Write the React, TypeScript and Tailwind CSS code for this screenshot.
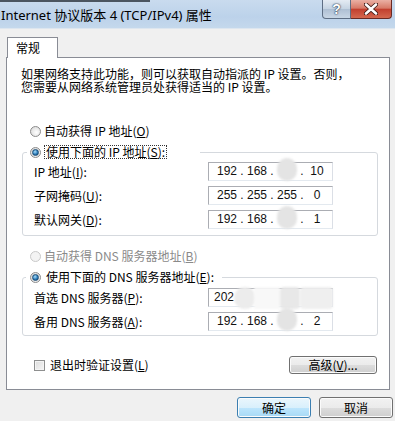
import React from 'react';

type Octet = string | null;

const Radio = ({ checked, disabled }: { checked?: boolean; disabled?: boolean }) => (
  <span
    className={`flex h-[11px] w-[11px] shrink-0 items-center justify-center rounded-full border ${
      disabled
        ? 'border-[#c9c9c9] bg-[#f3f3f3]'
        : 'border-[#8c8c8c] bg-[radial-gradient(circle_at_60%_60%,#ffffff,#d4d4d4)]'
    }`}
  >
    {checked && (
      <span className="h-[7px] w-[7px] rounded-full border border-[#1d4e76] bg-[radial-gradient(circle_at_40%_35%,#a8ddfb,#2d7dba_55%,#0f3f66)]" />
    )}
  </span>
);

const Key = ({ k }: { k: string }) => (
  <>
    (<span className="underline">{k}</span>)
  </>
);

const IpBox = ({ octets }: { octets: Octet[] }) => (
  <div className="flex h-[19px] w-[125px] items-center border border-[#abadb3] border-b-[#e3e9ef] border-r-[#dbdfe6] bg-white pl-[6px] font-['Liberation_Sans',sans-serif] text-[12px] leading-[17px] text-[#111]">
    {octets.map((o, i) => (
      <React.Fragment key={i}>
        {i > 0 && <span className="w-[6px] text-center">.</span>}
        <span className="relative w-[24px] text-center">
          {o ?? '\u00a0'}
          {o === null && (
            <span className="absolute left-[2px] top-[-5px] h-[23px] w-[20px] rounded-full bg-[#e4e4e4] blur-[1px]" />
          )}
        </span>
      </React.Fragment>
    ))}
  </div>
);

const SmearedBox = () => (
  <div className="relative flex h-[19px] w-[125px] items-center border border-[#abadb3] border-b-[#e3e9ef] border-r-[#dbdfe6] bg-white pl-[5px] font-['Liberation_Sans',sans-serif] text-[12px] leading-[17px] text-[#111]">
    <span>202</span>
    <span className="absolute left-[25px] top-[-2px] h-[22px] w-[22px] rounded-full bg-[#ececec] blur-[1px]" />
    <span className="absolute left-[45px] top-[-2px] h-[22px] w-[26px] bg-[#f8f8f8] blur-[1px]" />
    <span className="absolute left-[71px] top-[-2px] h-[22px] w-[20px] rounded-[4px] bg-[#e8e8e8] blur-[1px]" />
    <span className="absolute left-[91px] top-[-2px] h-[22px] w-[33px] rounded-[4px] bg-[#efefef] blur-[1px]" />
  </div>
);

const Row = ({ label, children }: { label: React.ReactNode; children: React.ReactNode }) => (
  <div className="flex h-[19px] items-center">
    <span className="w-[174px] leading-[14px]">{label}</span>
    {children}
  </div>
);

const WinButton = ({ children, primary, className }: { children: React.ReactNode; primary?: boolean; className: string }) => (
  <button
    className={`flex items-center justify-center rounded-[3px] border text-[12px] text-black shadow-[inset_0_0_0_1px_#fbfbfb] ${
      primary
        ? 'border-[#3c7fb1] bg-[linear-gradient(to_bottom,#eaf6fd_0%,#d9f0fc_50%,#bee6fd_50%,#a7d9f5_100%)]'
        : 'border-[#707070] bg-[linear-gradient(to_bottom,#f2f2f2_0%,#ebebeb_50%,#dddddd_50%,#cfcfcf_100%)]'
    } ${className}`}
  >
    {children}
  </button>
);

export default function App() {
  return (
    <div className="flex h-[421px] w-[395px] flex-col overflow-hidden bg-[#f0f0f0] font-['Noto_Sans_CJK_SC','Noto_Sans',sans-serif] text-[12px] text-black">
      {/* title bar */}
      <div className="flex h-[29px] shrink-0 border-b border-[#dde6ef] bg-[linear-gradient(to_bottom,#c9dbee,#bcd2ea_60%,#c4d8ec)]">
        <div className="flex flex-1 flex-col">
          <div className="h-[2px] w-[150px] bg-[#4b5560]" />
          <div className="pl-[1px] pt-[4px] font-['Noto_Sans','Noto_Sans_CJK_SC',sans-serif] text-[13px] leading-[18px] text-black">
            Internet 协议版本 4 (TCP/IPv4) 属性
          </div>
        </div>
        <div className="flex h-[19px] pr-[3px]">
          <div className="flex w-[29px] items-center justify-center rounded-bl-[4px] border border-t-0 border-[#5e6e84] bg-[linear-gradient(to_bottom,#e4ebf3,#c5d3e2_50%,#aebfd3_51%,#c8d6e5)] font-['Liberation_Sans',sans-serif] text-[14px] font-bold text-white [text-shadow:0_0_2px_#1e2c40,0_0_1px_#1e2c40]">
            ?
          </div>
          <div className="flex w-[41px] items-center justify-center rounded-br-[4px] border border-l-0 border-t-0 border-[#6a2a24] bg-[linear-gradient(to_bottom,#eab0a4,#d77a68_45%,#c2402f_52%,#d4684f)]">
            <svg width="14" height="12" viewBox="0 0 14 12">
              <path d="M2 1.5 L12 10.5 M12 1.5 L2 10.5" stroke="#3a1612" strokeWidth="4.2" strokeLinecap="round" />
              <path d="M2 1.5 L12 10.5 M12 1.5 L2 10.5" stroke="#ffffff" strokeWidth="2.6" strokeLinecap="round" />
            </svg>
          </div>
        </div>
      </div>

      {/* tab + panel */}
      <div className="ml-[6px] mt-[8px] w-[384px]">
        <div className="relative z-10 mb-[-1px] ml-[1px] flex h-[21px] w-[51px] items-center border border-b-0 border-[#898c95] bg-white pl-[8px]">
          常规
        </div>
        <div className="flex h-[333px] flex-col border border-[#898c95] bg-white">
          <div className="ml-[14px] mt-[9px] flex flex-col">
            <div className="h-[13px] leading-[13px]">如果网络支持此功能，则可以获取自动指派的 IP 设置。否则，</div>
            <div className="h-[14px] leading-[13px]">您需要从网络系统管理员处获得适当的 IP 设置。</div>
          </div>

          <div className="ml-[23px] mt-[29px] flex h-[16px] items-center gap-[3px]">
            <Radio />
            <span>
              自动获得 IP 地址<Key k="O" />
            </span>
          </div>

          <fieldset className="ml-[15px] mr-[11px] mt-[6px] rounded-[3px] border border-[#d5d9de]">
            <legend className="ml-[4px] flex h-[14px] w-[173px] items-center gap-[3px] pl-[3px]">
              <Radio checked />
              <span className="border border-dotted border-[#333] px-[1px] leading-[12px]">
                使用下面的 IP 地址<Key k="S" />:
              </span>
            </legend>
            <div className="flex flex-col gap-[5px] pb-[6px] pl-[11px] pt-[3px]">
              <Row label={<>IP 地址<Key k="I" />:</>}>
                <IpBox octets={['192', '168', null, '10']} />
              </Row>
              <Row label={<>子网掩码<Key k="U" />:</>}>
                <IpBox octets={['255', '255', '255', '0']} />
              </Row>
              <Row label={<>默认网关<Key k="D" />:</>}>
                <IpBox octets={['192', '168', null, '1']} />
              </Row>
            </div>
          </fieldset>

          <div className="ml-[23px] mt-[12px] flex h-[16px] items-center gap-[3px] text-[#8a8a8a]">
            <Radio disabled />
            <span>
              自动获得 DNS 服务器地址<Key k="B" />
            </span>
          </div>

          <fieldset className="ml-[15px] mr-[11px] mt-[6px] rounded-[3px] border border-[#d5d9de]">
            <legend className="ml-[3px] flex h-[14px] w-[196px] items-center gap-[3px] pl-[4px]">
              <Radio checked />
              <span className="px-[2px] leading-[12px]">
                使用下面的 DNS 服务器地址<Key k="E" />:
              </span>
            </legend>
            <div className="flex flex-col gap-[5px] pb-[4px] pl-[11px] pt-[4px]">
              <Row label={<>首选 DNS 服务器<Key k="P" />:</>}>
                <SmearedBox />
              </Row>
              <Row label={<>备用 DNS 服务器<Key k="A" />:</>}>
                <IpBox octets={['192', '168', null, '2']} />
              </Row>
            </div>
          </fieldset>

          <div className="ml-[27px] mr-[12px] mt-[20px] flex h-[18px] items-center justify-between">
            <div className="flex items-center gap-[5px]">
              <span className="h-[11px] w-[11px] border border-[#8e8f8f] bg-[linear-gradient(135deg,#dcdcdc,#f6f6f6)] shadow-[inset_0_0_0_1px_#f4f4f4]" />
              <span>
                退出时验证设置<Key k="L" />
              </span>
            </div>
            <WinButton className="h-[18px] w-[88px]">
              高级<Key k="V" />...
            </WinButton>
          </div>
        </div>
      </div>

      {/* dialog buttons */}
      <div className="mt-[7px] flex gap-[8px] pl-[237px]">
        <WinButton primary className="h-[21px] w-[74px]">
          确定
        </WinButton>
        <WinButton className="h-[21px] w-[74px]">取消</WinButton>
      </div>
    </div>
  );
}
